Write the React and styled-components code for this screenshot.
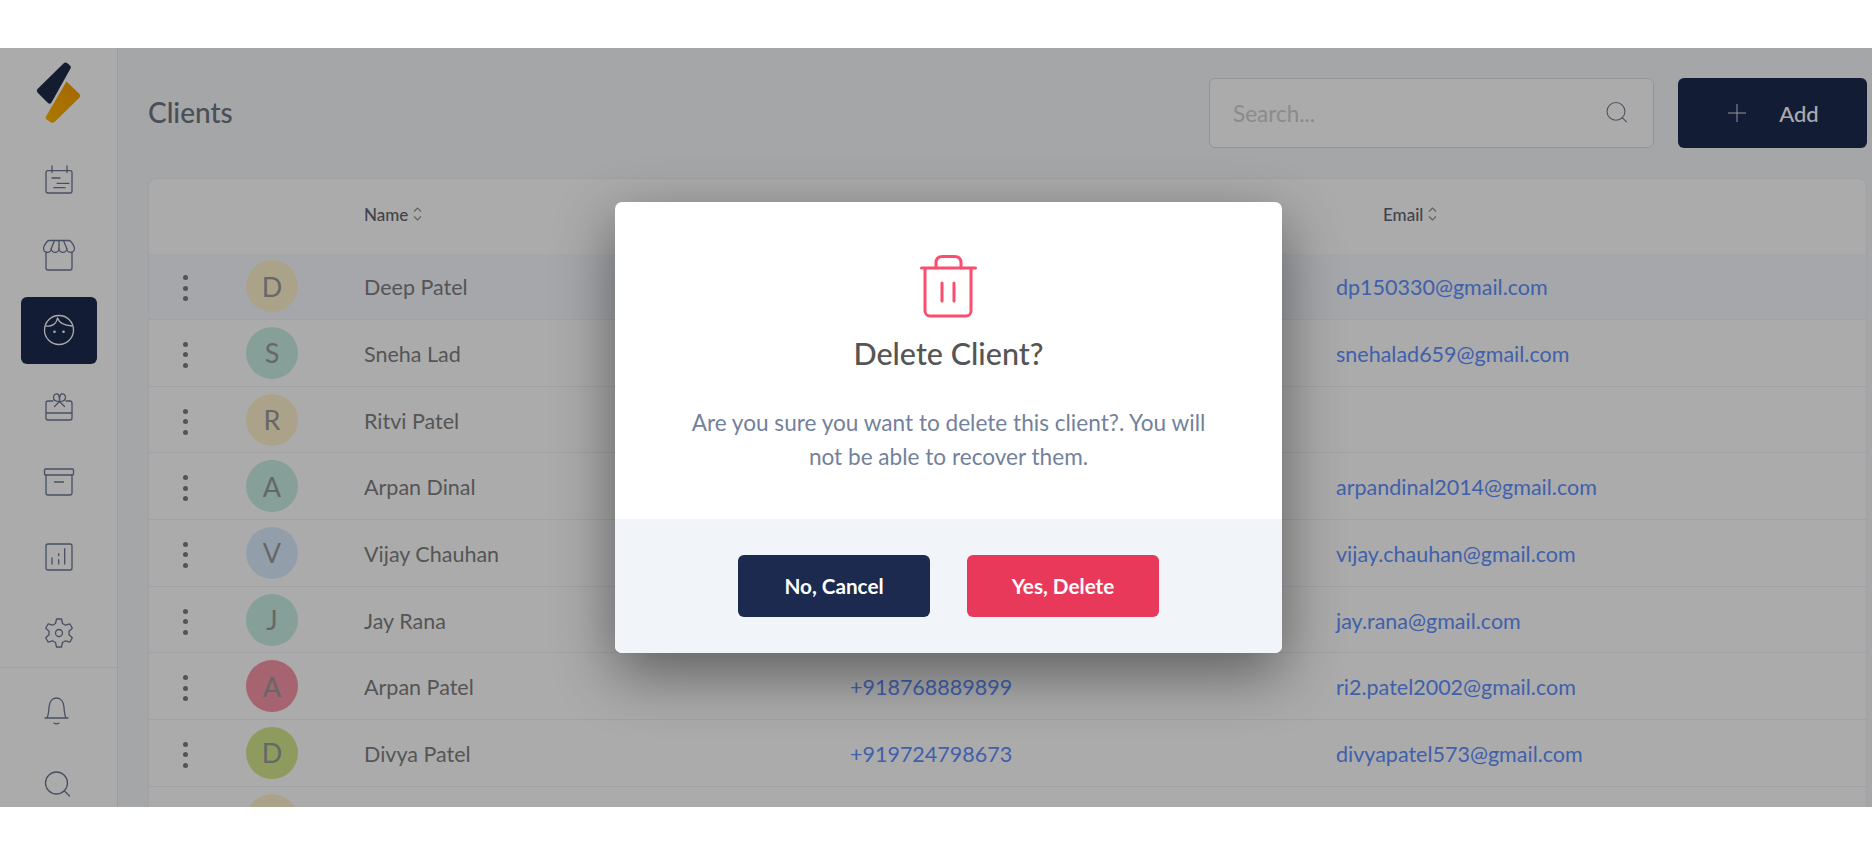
import React from 'react';
import styled, { createGlobalStyle } from 'styled-components';

const GlobalStyle = createGlobalStyle`
	html, body {
		margin: 0;
		height: 855px;
		overflow: hidden;
		background: #fff;
		font-family: 'Lato', 'Open Sans', sans-serif;
	}
	* {
		box-sizing: border-box;
	}
`;

const Screen = styled.div`
	position: relative;
	display: flex;
	height: 759px;
	margin-top: 48px;
	overflow: hidden;
	background: #f6f8fb;
`;

const Sidebar = styled.aside`
	flex: 0 0 118px;
	display: flex;
	flex-direction: column;
	background: #fff;
	border-right: 1px solid #e8ebf0;
`;

const LogoBox = styled.div`
	height: 97.5px;
	padding: 14px 0 0 36px;
	flex: none;
`;

const NavGroup = styled.nav`
	display: flex;
	flex-direction: column;
	gap: 8.7px;
	padding-bottom: 0.5px;
	border-bottom: ${p => (p.$divided ? '1px solid #eceff3' : 'none')};
	padding-top: ${p => (p.$divided ? '0' : '7.5px')};
`;

const NavItem = styled.div`
	display: flex;
	align-items: center;
	justify-content: center;
	width: 76px;
	height: 67px;
	margin-left: 21px;
	border-radius: 6px;
	background: ${p => (p.$active ? '#1b2a4e' : 'transparent')};
	color: ${p => (p.$active ? '#fff' : '#6b7892')};
`;

const Main = styled.main`
	flex: 1;
	min-width: 0;
	padding: 30px 5px 0 30px;
`;

const TopBar = styled.header`
	display: flex;
	align-items: center;
	gap: 24px;
	height: 70px;
`;

const PageTitle = styled.h1`
	flex: 1;
	margin: 0;
	padding-bottom: 3px;
	font-size: 28px;
	font-weight: 500;
	color: #6f7681;
`;

const SearchBox = styled.div`
	display: flex;
	align-items: center;
	justify-content: space-between;
	width: 445px;
	height: 70px;
	padding: 0 22px 0 23px;
	background: #fff;
	border: 1px solid #d9dee6;
	border-radius: 6px;
	color: #6f7a8c;
`;

const Placeholder = styled.span`
	font-size: 22.5px;
	color: #cfcfcf;
`;

const AddButton = styled.div`
	display: flex;
	align-items: center;
	justify-content: center;
	gap: 33px;
	width: 189px;
	height: 70px;
	padding-left: 2px;
	background: #1b2a4e;
	border-radius: 6px;
	font-size: 22px;
	font-weight: 500;
	color: #fff;
`;

const Card = styled.section`
	margin-top: 30px;
	background: #fff;
	border: 1px solid #eef0f4;
	border-radius: 8px 8px 0 0;
`;

const HeadRow = styled.div`
	display: grid;
	grid-template-columns: 215px 1019px 1fr;
	align-items: center;
	height: 74.5px;
	padding-bottom: 4px;
`;

const HeadCell = styled.span`
	display: flex;
	align-items: center;
	gap: 5px;
	font-size: 17px;
	font-weight: 500;
	color: #5f6571;
`;

const Row = styled.div`
	display: grid;
	grid-template-columns: 97px 118px 486px 486px 1fr;
	align-items: center;
	height: 66.67px;
	border-bottom: 1px solid #edf0f5;
	background: ${p => (p.$highlight ? '#f6f9ff' : 'transparent')};
`;

const Dots = styled.div`
	display: flex;
	flex-direction: column;
	align-items: center;
	gap: 5.5px;
	width: 73px;
	padding-top: 4px;
`;

const Dot = styled.i`
	width: 5px;
	height: 5px;
	border-radius: 50%;
	background: #7c7c7c;
`;

const Avatar = styled.div`
	display: flex;
	align-items: center;
	justify-content: center;
	width: 52px;
	height: 52px;
	border-radius: 50%;
	background: ${p => p.$color};
	font-size: 27px;
	color: #9a9a9a;
`;

const NameCell = styled.span`
	padding-top: 2px;
	font-size: 21.5px;
	color: #7f7f7f;
`;

const LinkCell = styled.span`
	padding-top: 2px;
	font-size: 21.5px;
	color: #5f90ff;
`;

const Overlay = styled.div`
	position: absolute;
	inset: 0;
	display: flex;
	align-items: center;
	justify-content: center;
	padding-left: 25px;
	background: rgba(0, 0, 0, 0.33);
`;

const Modal = styled.div`
	width: 667px;
	height: 451px;
	display: flex;
	flex-direction: column;
	overflow: hidden;
	background: #fff;
	border-radius: 7px;
	box-shadow: 0 20px 60px rgba(0, 0, 0, 0.45);
`;

const ModalBody = styled.div`
	flex: 1;
	display: flex;
	flex-direction: column;
	align-items: center;
	padding-top: 53px;
`;

const ModalTitle = styled.h2`
	margin: 17px 0 0;
	font-size: 30.5px;
	line-height: 36px;
	font-weight: 500;
	color: #555;
`;

const ModalText = styled.p`
	width: 540px;
	margin: 35px 0 0;
	font-size: 22.6px;
	line-height: 33.5px;
	text-align: center;
	color: #73819b;
`;

const ModalFooter = styled.div`
	display: flex;
	justify-content: center;
	align-items: center;
	gap: 37px;
	height: 134px;
	flex: none;
	padding-bottom: 1px;
	background: #f1f4f9;
`;

const ModalButton = styled.div`
	display: flex;
	align-items: center;
	justify-content: center;
	width: 192px;
	height: 62px;
	border-radius: 6px;
	background: ${p => (p.$danger ? '#e9395b' : '#1b2a4e')};
	font-size: 20.7px;
	font-weight: 700;
	color: #fff;
`;

const Icon = ({ size = 32, children }) => (
	<svg
		width={size}
		height={size}
		viewBox='0 0 32 32'
		fill='none'
		stroke='currentColor'
		strokeWidth='1.3'
		strokeLinecap='round'
		strokeLinejoin='round'>
		{children}
	</svg>
);

const Logo = () => (
	<svg width='46' height='64' viewBox='0 0 46 64'>
		<defs>
			<linearGradient id='logoGold' x1='1' y1='0' x2='0' y2='1'>
				<stop offset='0' stopColor='#f59a00' />
				<stop offset='1' stopColor='#ffb400' />
			</linearGradient>
		</defs>
		<path
			d='M27.5 1.5 Q29.5 0 31 1 L34 3.4 Q35.5 4.6 34.5 6.6 L15.5 40.5 Q14 42.6 12 41 L1.5 30.5 Q0 28.8 1.5 27 Z'
			fill='#1f2a48'
		/>
		<path
			d='M30.5 19.5 L43.5 32 Q45 33.8 43.5 35.6 L18.6 60 Q16.8 61.4 14.8 60.2 L10.6 57.4 Q9 56.2 10 54.4 Z'
			fill='url(#logoGold)'
		/>
	</svg>
);

const CalendarIcon = () => (
	<Icon>
		<rect x='3' y='7.700' width='26' height='22.300' rx='2' />
		<path d='M9 3v6.500M24 3v6.500M9 15h8M14 20.300h12M11 24.700h11' />
	</Icon>
);

const StoreIcon = () => (
	<Icon>
		<path d='M3 13v16a2 2 0 0 0 2 2h22a2 2 0 0 0 2-2V13' />
		<path d='M6 1.500h20c2 0 5.500 5.500 5.500 8a3.875 3.875 0 0 1-7.750 0 3.875 3.875 0 0 1-7.750 0 3.875 3.875 0 0 1-7.750 0 3.875 3.875 0 0 1-7.750 0c0-2.500 3.500-8 5.500-8Z' />
		<path d='M11.500 1.500L8.250 9.500M16 1.500v8M20.500 1.500l3.250 8' />
	</Icon>
);

const FaceIcon = () => (
	<Icon>
		<circle cx='16' cy='16' r='14.500' />
		<path d='M3 12c5.500 1 10.500-2 11.500-8 1.500 4.500 7 7.500 14.500 8' />
		<circle cx='11.500' cy='17.700' r='1.300' fill='currentColor' stroke='none' />
		<circle cx='20.500' cy='17.700' r='1.300' fill='currentColor' stroke='none' />
	</Icon>
);

const GiftIcon = () => (
	<Icon>
		<path d='M10 11H5a2 2 0 0 0-2 2v15a2 2 0 0 0 2 2h22a2 2 0 0 0 2-2V13a2 2 0 0 0-2-2h-4M3 23h26' />
		<path d='M16.500 11.500c-3 0-6-1-6-4s2-4 4-3.500 2 4.500 2 7.500c0-3 0-7 2-7.500s4 .5 4 3.500-3 4-6 4' />
		<path d='M16.500 11.500l-5 5M16.500 11.500l5 5' />
	</Icon>
);

const ArchiveIcon = () => (
	<Icon>
		<rect x='1.500' y='3' width='29' height='6' rx='1' />
		<path d='M3 9v18a2 2 0 0 0 2 2h22a2 2 0 0 0 2-2V9M11.500 16h9' />
	</Icon>
);

const ChartIcon = () => (
	<Icon>
		<rect x='3' y='3' width='26' height='26' rx='2' />
		<path d='M9 17v6M15.700 12.700v2M15.700 18.700V23M21.700 7.700V23' />
	</Icon>
);

const GearIcon = () => (
	<Icon>
		<circle cx='16' cy='16' r='3.500' />
		<path d='M13.500 2h5l1 4.500 3 1.700 4.300-1.400 2.500 4.400-3.300 3v3.600l3.300 3-2.500 4.400-4.300-1.400-3 1.700-1 4.500h-5l-1-4.500-3-1.700-4.300 1.400-2.500-4.400 3.300-3v-3.600l-3.300-3 2.500-4.400 4.300 1.400 3-1.700Z' />
	</Icon>
);

const BellIcon = () => (
	<Icon>
		<path d='M2 25h23M4 25c1.500-3 1.800-7 2-11 .4-5 3-9 7.500-9s7.100 4 7.500 9c.2 4 .5 8 2 11M11 30c1.500 1 3.500 1 5 0' />
	</Icon>
);

const SearchIcon = ({ size = 32 }) => (
	<Icon size={size}>
		<circle cx='13.500' cy='14' r='11' />
		<path d='M21.500 22l5 5' />
	</Icon>
);

const PlusIcon = () => (
	<svg width='18' height='18' viewBox='0 0 18 18' stroke='currentColor' strokeWidth='1' opacity='0.85'>
		<path d='M9 0v18M0 9h18' />
	</svg>
);

const SortIcon = () => (
	<svg width='9' height='16' viewBox='0 0 9 16' fill='none' stroke='#8c919b' strokeWidth='1.1'>
		<path d='M1 5.500L4.500 2 8 5.500M1 10.500L4.500 14 8 10.500' />
	</svg>
);

const TrashIcon = () => (
	<svg
		width='57'
		height='63'
		viewBox='0 0 57 63'
		fill='none'
		stroke='#fb4d6d'
		strokeWidth='3'
		strokeLinecap='round'
		strokeLinejoin='round'>
		<path d='M1.500 13h54M5 13v43a5 5 0 0 0 5 5h36a5 5 0 0 0 5-5V13' />
		<path d='M16 13V8q0-6.500 6.500-6.500h12Q41 1.500 41 8v5' />
		<path d='M22 28v18M34 28v18' />
	</svg>
);

const clients = [
	{ letter: 'D', color: '#fff3cd', name: 'Deep Patel', email: 'dp150330@gmail.com' },
	{ letter: 'S', color: '#c8eee5', name: 'Sneha Lad', email: 'snehalad659@gmail.com' },
	{ letter: 'R', color: '#fff3cd', name: 'Ritvi Patel' },
	{ letter: 'A', color: '#c8eee5', name: 'Arpan Dinal', email: 'arpandinal2014@gmail.com' },
	{ letter: 'V', color: '#daeeff', name: 'Vijay Chauhan', email: 'vijay.chauhan@gmail.com' },
	{ letter: 'J', color: '#c8eee5', name: 'Jay Rana', email: 'jay.rana@gmail.com' },
	{ letter: 'A', color: '#f695a6', name: 'Arpan Patel', phone: '+918768889899', email: 'ri2.patel2002@gmail.com' },
	{ letter: 'D', color: '#d2e78c', name: 'Divya Patel', phone: '+919724798673', email: 'divyapatel573@gmail.com' },
	{ letter: '', color: '#fff3cd', name: '' }
];

const App = () => (
	<>
		<GlobalStyle />
		<Screen>
			<Sidebar>
				<LogoBox>
					<Logo />
				</LogoBox>
				<NavGroup $divided>
					<NavItem><CalendarIcon /></NavItem>
					<NavItem><StoreIcon /></NavItem>
					<NavItem $active><FaceIcon /></NavItem>
					<NavItem><GiftIcon /></NavItem>
					<NavItem><ArchiveIcon /></NavItem>
					<NavItem><ChartIcon /></NavItem>
					<NavItem><GearIcon /></NavItem>
				</NavGroup>
				<NavGroup>
					<NavItem><BellIcon /></NavItem>
					<NavItem><SearchIcon /></NavItem>
				</NavGroup>
			</Sidebar>
			<Main>
				<TopBar>
					<PageTitle>Clients</PageTitle>
					<SearchBox>
						<Placeholder>Search...</Placeholder>
						<SearchIcon size={26} />
					</SearchBox>
					<AddButton>
						<PlusIcon />
						Add
					</AddButton>
				</TopBar>
				<Card>
					<HeadRow>
						<span />
						<HeadCell>Name <SortIcon /></HeadCell>
						<HeadCell>Email <SortIcon /></HeadCell>
					</HeadRow>
					{clients.map((client, i) => (
						<Row key={i} $highlight={i === 0}>
							<Dots>
								<Dot />
								<Dot />
								<Dot />
							</Dots>
							<Avatar $color={client.color}>{client.letter}</Avatar>
							<NameCell>{client.name}</NameCell>
							<LinkCell>{client.phone}</LinkCell>
							<LinkCell>{client.email}</LinkCell>
						</Row>
					))}
				</Card>
			</Main>
			<Overlay>
				<Modal>
					<ModalBody>
						<TrashIcon />
						<ModalTitle>Delete Client?</ModalTitle>
						<ModalText>
							Are you sure you want to delete this client?. You will not be able to recover them.
						</ModalText>
					</ModalBody>
					<ModalFooter>
						<ModalButton>No, Cancel</ModalButton>
						<ModalButton $danger>Yes, Delete</ModalButton>
					</ModalFooter>
				</Modal>
			</Overlay>
		</Screen>
	</>
);

export default App;
